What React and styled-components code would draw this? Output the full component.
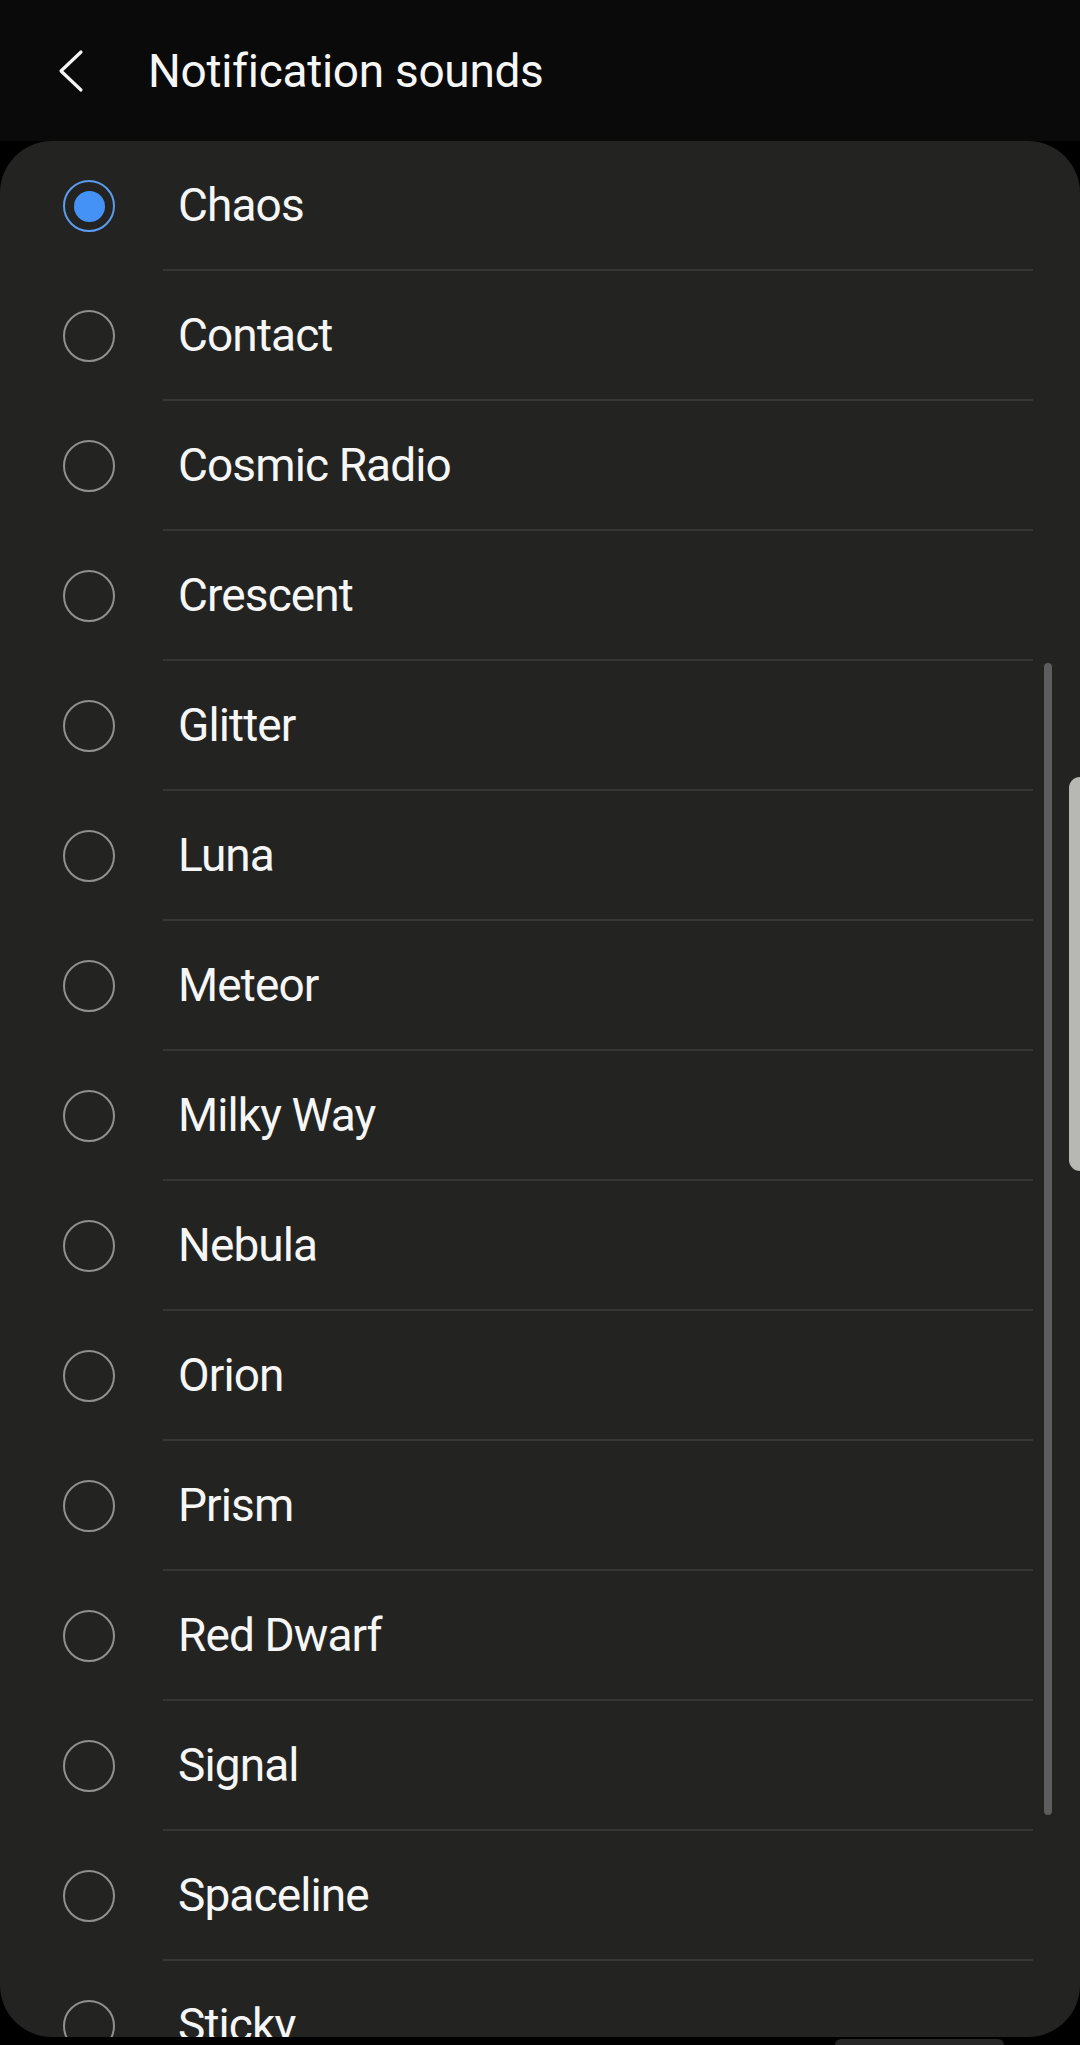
import styled, { createGlobalStyle } from "styled-components";

const GlobalStyle = createGlobalStyle`
  html, body {
    margin: 0;
    padding: 0;
    background: #000;
  }
  body {
    font-family: Roboto, "Noto Sans", sans-serif;
    color: #f4f4f4;
    -webkit-font-smoothing: antialiased;
  }
`;

const Screen = styled.div`
  position: relative;
  width: 1080px;
  height: 2045px;
  background: #000;
  display: flex;
  flex-direction: column;
  overflow: hidden;
`;

const Header = styled.header`
  height: 141px;
  flex-shrink: 0;
  background: #0a0a0a;
  display: flex;
  align-items: center;
  padding-left: 56px;
  gap: 44px;
`;

const BackButton = styled.button`
  background: none;
  border: none;
  padding: 0;
  width: 48px;
  height: 48px;
  display: flex;
  align-items: center;
  justify-content: flex-start;
  svg {
    display: block;
  }
`;

const Title = styled.h1`
  margin: 0;
  font-size: 46px;
  font-weight: 400;
  letter-spacing: -0.3px;
  color: #f6f6f6;
`;

const Panel = styled.div`
  position: relative;
  height: 1896px;
  flex-shrink: 0;
  background: #232422;
  border-radius: 52px;
  overflow: hidden;
`;

const List = styled.ul`
  list-style: none;
  margin: 0;
  padding: 0;
`;

const Row = styled.li`
  display: flex;
  height: 130px;
`;

const RadioCell = styled.div`
  width: 163px;
  flex-shrink: 0;
  display: flex;
  align-items: center;
  padding-left: 63px;
  box-sizing: border-box;
`;

const Radio = styled.span`
  width: 52px;
  height: 52px;
  box-sizing: border-box;
  border-radius: 50%;
  border: 2.5px solid ${(p) => (p.$checked ? "#5b9bf0" : "#90908d")};
  display: flex;
  align-items: center;
  justify-content: center;

  &::after {
    content: "";
    display: ${(p) => (p.$checked ? "block" : "none")};
    width: 31px;
    height: 31px;
    border-radius: 50%;
    background: #4592f7;
  }
`;

const Label = styled.div`
  flex: 1;
  margin-right: 47px;
  padding-left: 15px;
  display: flex;
  align-items: center;
  font-size: 46px;
  letter-spacing: -0.9px;
  border-bottom: 2px solid #363735;
  color: #f6f6f6;
`;

const ScrollThumb = styled.div`
  position: absolute;
  right: 28px;
  top: 522px;
  width: 8px;
  height: 1152px;
  border-radius: 4px;
  background: #5c5d5c;
`;

const EdgeHandle = styled.div`
  position: absolute;
  right: 0;
  top: 777px;
  width: 11px;
  height: 394px;
  border-radius: 12px 0 0 12px;
  background: #b7b7b3;
`;

const Footer = styled.div`
  flex: 1;
  display: flex;
  justify-content: flex-end;
  align-items: flex-end;
  padding-right: 76px;
`;

const NavHint = styled.div`
  width: 169px;
  height: 6px;
  border-radius: 20px 20px 0 0;
  background: #262626;
`;

const sounds = [
  "Chaos",
  "Contact",
  "Cosmic Radio",
  "Crescent",
  "Glitter",
  "Luna",
  "Meteor",
  "Milky Way",
  "Nebula",
  "Orion",
  "Prism",
  "Red Dwarf",
  "Signal",
  "Spaceline",
  "Sticky",
];

export default function App() {
  return (
    <>
      <GlobalStyle />
      <Screen>
        <Header>
          <BackButton aria-label="Back">
            <svg width="30" height="44" viewBox="0 0 30 44">
              <polyline
                points="25,3 5,22 25,41"
                fill="none"
                stroke="#f4f4f4"
                strokeWidth="3.2"
                strokeLinecap="round"
                strokeLinejoin="round"
              />
            </svg>
          </BackButton>
          <Title>Notification sounds</Title>
        </Header>

        <Panel>
          <List>
            {sounds.map((name, i) => (
              <Row key={name}>
                <RadioCell>
                  <Radio $checked={i === 0} />
                </RadioCell>
                <Label>{name}</Label>
              </Row>
            ))}
          </List>
          <ScrollThumb />
        </Panel>

        <Footer>
          <NavHint />
        </Footer>

        <EdgeHandle />
      </Screen>
    </>
  );
}
